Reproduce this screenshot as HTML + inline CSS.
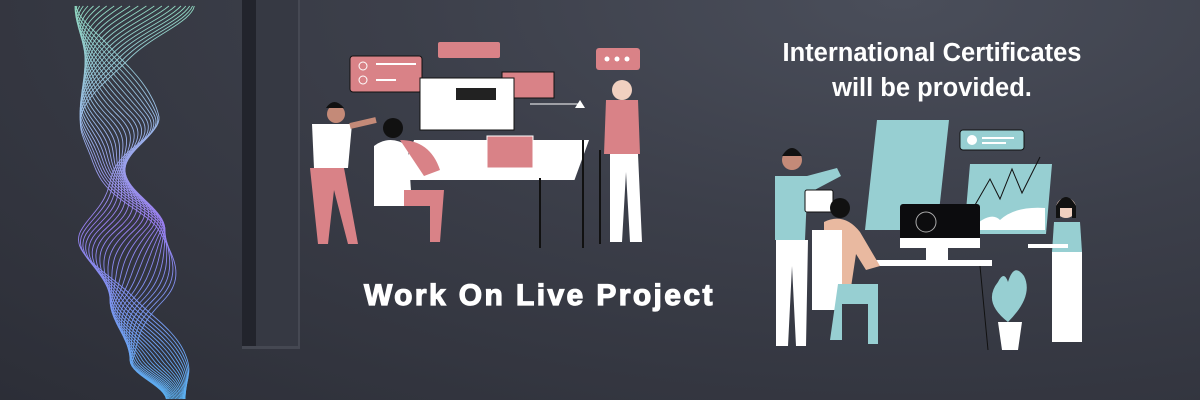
<!DOCTYPE html>
<html><head><meta charset="utf-8"><style>
html,body{margin:0;padding:0}
body{width:1200px;height:400px;overflow:hidden;position:relative;background:radial-gradient(ellipse at 75% 0%,#4a4e5a 0%,#3c3f4a 40%,#2c2e37 100%);font-family:"Liberation Sans",sans-serif}
.t{position:absolute;color:#fff;font-weight:bold;white-space:nowrap}
</style></head><body>
<svg width="1200" height="400" style="position:absolute;left:0;top:0">
<defs>
<linearGradient id="wg" x1="0" y1="0" x2="0" y2="1"><stop offset="0" stop-color="#8fd8c0"/><stop offset="0.3" stop-color="#9ab8e8"/><stop offset="0.55" stop-color="#9a7ef0"/><stop offset="1" stop-color="#5ab0f0"/></linearGradient>
</defs>
<rect x="242" y="0" width="58" height="348" fill="#363943"/>
<rect x="242" y="0" width="14" height="348" fill="#22242c"/>
<rect x="242" y="346" width="58" height="3" fill="#454852"/>
<rect x="298" y="0" width="2" height="348" fill="#464953"/>
<g id="waves" fill="none" stroke="url(#wg)" stroke-width="0.9"></g>
<g>
<rect x="350" y="56" width="72" height="36" rx="3" fill="#d98287" stroke="#111"/>
<circle cx="363" cy="66" r="4" fill="none" stroke="#fff"/><circle cx="363" cy="80" r="4" fill="none" stroke="#fff"/>
<rect x="376" y="63" width="40" height="2" fill="#fff"/><rect x="376" y="79" width="20" height="2" fill="#fff"/>
<rect x="438" y="42" width="62" height="16" rx="2" fill="#d98287"/>
<rect x="502" y="72" width="52" height="26" fill="#d98287" stroke="#111"/>
<rect x="596" y="48" width="44" height="22" rx="3" fill="#d98287"/>
<circle cx="607" cy="59" r="2.5" fill="#fff"/><circle cx="617" cy="59" r="2.5" fill="#fff"/><circle cx="627" cy="59" r="2.5" fill="#fff"/>
<rect x="420" y="78" width="94" height="52" fill="#fff" stroke="#111"/>
<rect x="456" y="88" width="40" height="12" fill="#222"/>
<rect x="410" y="140" width="175" height="40" fill="#fff" transform="skewX(-20) translate(55 0)"/>
<rect x="487" y="136" width="46" height="32" fill="#d98287" stroke="#fff"/>
<line x1="530" y1="104" x2="580" y2="104" stroke="#fff"/>
<path d="M575 108 L580 100 L585 108Z" fill="#fff"/>
<line x1="540" y1="178" x2="540" y2="248" stroke="#111" stroke-width="2"/>
<line x1="583" y1="140" x2="583" y2="248" stroke="#111" stroke-width="2"/>
<circle cx="336" cy="114" r="9" fill="#c48a78"/><path d="M326 108 q8 -12 18 0 z" fill="#111"/>
<path d="M312 124 h40 l-4 44 h-34 z" fill="#fff"/>
<path d="M310 168 h34 l14 76 h-10 l-14 -54 l-6 54 h-10 z" fill="#d98287"/>
<path d="M350 126 l26 -6" stroke="#c48a78" stroke-width="6"/>
<circle cx="393" cy="128" r="10" fill="#111"/>
<path d="M374 146 q16 -12 34 0 l4 60 h-38 z" fill="#fff"/>
<path d="M400 140 q30 0 40 30 l-16 6 z" fill="#d98287"/>
<path d="M404 190 h40 l-4 52 h-10 l0 -36 h-26z" fill="#d98287"/>
<circle cx="622" cy="90" r="10" fill="#f0d0c0"/>
<path d="M606 100 h32 l2 54 h-36 z" fill="#d98287"/>
<path d="M610 154 h28 l4 88 h-12 l-4 -70 l-4 70 h-12 z" fill="#fff"/>
<line x1="600" y1="150" x2="600" y2="244" stroke="#111" stroke-width="2"/>
</g>
<g>
<path d="M877 120 h72 l-12 110 h-72 z" fill="#97cfd2"/>
<rect x="960" y="130" width="64" height="20" rx="3" fill="#97cfd2" stroke="#111"/>
<circle cx="972" cy="140" r="5" fill="#fff"/>
<rect x="982" y="137" width="32" height="2" fill="#fff"/><rect x="982" y="142" width="24" height="2" fill="#fff"/>
<path d="M970 164 h82 l-6 70 h-82 z" fill="#97cfd2"/>
<path d="M975 205 l15 -26 l10 20 l12 -30 l10 24 l18 -36" stroke="#111" fill="none"/>
<path d="M970 230 q20 -20 30 -10 q15 -14 45 -12 v22z" fill="#fff"/>
<rect x="900" y="204" width="80" height="44" rx="3" fill="#0c0c0e"/>
<rect x="900" y="238" width="80" height="10" fill="#fff"/>
<circle cx="926" cy="222" r="10" fill="none" stroke="#aaa"/>
<rect x="868" y="260" width="124" height="6" fill="#fff"/>
<rect x="926" y="248" width="22" height="12" fill="#fff"/>
<line x1="980" y1="266" x2="988" y2="350" stroke="#111"/>
<circle cx="792" cy="160" r="10" fill="#c48a78"/><path d="M782 156 q10 -16 20 0z" fill="#111"/>
<path d="M775 176 h32 l30 -8 l4 8 l-34 18 l-2 46 h-30 z" fill="#97cfd2"/>
<rect x="805" y="190" width="28" height="22" rx="2" fill="#fff" stroke="#111"/>
<path d="M776 240 h32 l-2 106 h-10 l-4 -80 l-4 80 h-12 z" fill="#fff"/>
<circle cx="840" cy="208" r="10" fill="#111"/>
<path d="M824 222 q20 -10 36 10 l20 34 l-14 4 l-10 -16 l-6 40 h-26 z" fill="#e9b9a0"/>
<path d="M812 230 h30 v80 h-30 z" fill="#fff"/>
<path d="M838 284 h40 v60 h-10 v-40 h-26 v36 h-12 z" fill="#97cfd2"/>
<path d="M998 322 h24 l-4 28 h-16 z" fill="#fff"/>
<path d="M1008 322 q-26 -20 -10 -40 q6 -12 10 0 q6 -20 16 -6 q10 20 -16 46z" fill="#97cfd2"/>
<circle cx="1066" cy="208" r="10" fill="#f0d0c0"/><path d="M1056 206 q10 -18 20 0 v12 h-4 v-10 h-12 v10 h-4z" fill="#111"/>
<path d="M1054 222 h26 l2 30 h-30 z" fill="#97cfd2"/>
<rect x="1028" y="244" width="40" height="4" fill="#fff"/>
<path d="M1052 252 h30 l0 90 h-30 z" fill="#fff"/>
</g>
</svg>
<div class="t" style="left:364px;top:279px;font-size:30px;letter-spacing:2.4px;-webkit-text-stroke:1.2px #fff">Work On Live Project</div>
<div class="t" style="left:772px;top:36px;width:320px;text-align:center;font-size:25.5px;line-height:35px">International Certificates<br>will be provided.</div>
<script>
var g=document.getElementById('waves'),s='';
function lerp(a,b,t){return a+(b-a)*t}
var cp=[[6,135],[60,125],[115,120],[170,105],[230,120],[300,150],[360,160],[400,175]];
var wp=[[6,60],[60,40],[115,40],[170,20],[230,45],[300,40],[360,30],[400,10]];
function interp(arr,y){for(var k=0;k<arr.length-1;k++){if(y<=arr[k+1][0]){var t=(y-arr[k][0])/(arr[k+1][0]-arr[k][0]);t=(1-Math.cos(t*Math.PI))/2;return lerp(arr[k][1],arr[k+1][1],t);}}return arr[arr.length-1][1];}
for(var i=0;i<24;i++){var d='',ph=Math.PI*i/23;
for(var y=6;y<=400;y+=3){var t=y/400;
var x=interp(cp,y)+interp(wp,y)*Math.cos(ph+t*10);
d+=(y==6?'M':'L')+x.toFixed(1)+' '+y;}
s+='<path d="'+d+'"/>';}
g.innerHTML=s;
</script>
</body></html>
